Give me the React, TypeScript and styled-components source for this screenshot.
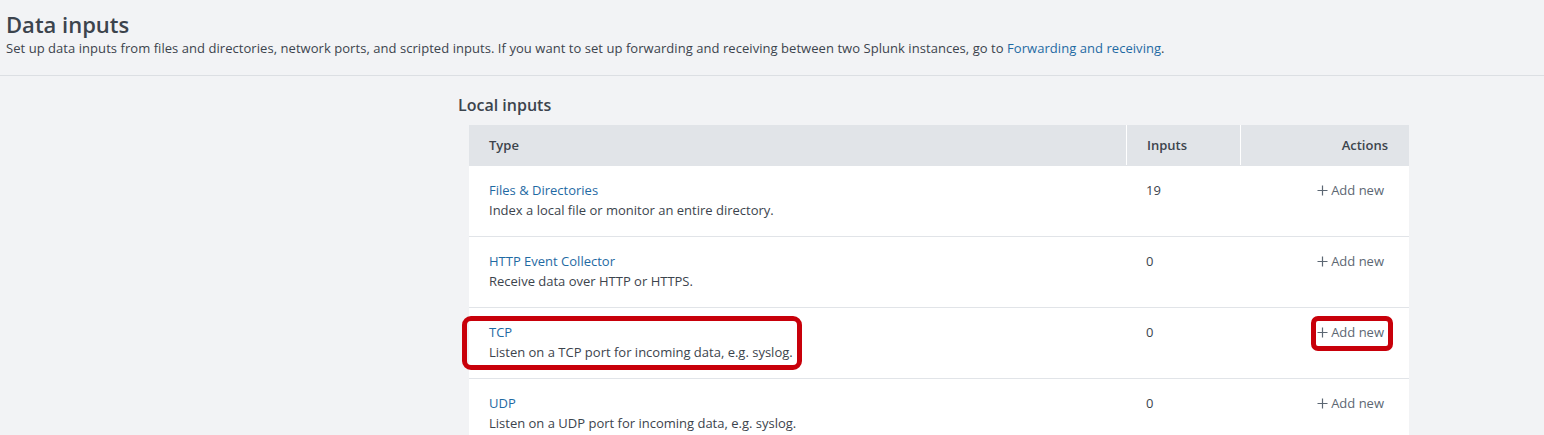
import React from "react";
import styled, { createGlobalStyle } from "styled-components";

const Global = createGlobalStyle`
  html, body { margin: 0; padding: 0; background: #f2f3f5; }
  body { font-family: "Open Sans", "Liberation Sans", sans-serif; color: #3c444d; }
`;

const Page = styled.div`
  width: 1544px;
  height: 435px;
  overflow: hidden;
  background: #f2f3f5;
`;

const Header = styled.header`
  padding: 10px 6px 17px;
  border-bottom: 1px solid #dcdfe3;
`;

const Title = styled.h1`
  margin: 0;
  font-size: 22px;
  font-weight: 600;
  line-height: 28px;
  color: #3c444d;
`;

const Desc = styled.p`
  margin: 0;
  font-size: 13px;
  line-height: 20px;
  letter-spacing: 0.05px;
  color: #3c444d;
`;

const Link = styled.a`
  color: #1f6aa3;
  text-decoration: none;
`;

const Section = styled.section`
  padding: 18px 0 0 458px;
`;

const SectionTitle = styled.h2`
  margin: 0 0 9px;
  font-size: 16px;
  font-weight: 600;
  line-height: 22px;
  color: #3c444d;
`;

const Table = styled.div`
  margin-left: 11px;
  width: 940px;
  display: grid;
  grid-template-columns: 657px 114px 169px;
`;

const HeadCell = styled.div<{ $right?: boolean; $sep?: boolean }>`
  height: 40px;
  background: #e1e4e8;
  display: flex;
  align-items: center;
  justify-content: ${(p) => (p.$right ? "flex-end" : "flex-start")};
  padding: ${(p) => (p.$right ? "0 21px 0 0" : "0 0 0 20px")};
  font-size: 13px;
  font-weight: 600;
  color: #3c444d;
  border-left: ${(p) => (p.$sep ? "1px solid #ffffff" : "none")};
  box-sizing: border-box;
`;

const Cell = styled.div<{ $right?: boolean }>`
  background: #ffffff;
  height: 71px;
  box-sizing: border-box;
  border-top: 1px solid #e1e4e8;
  padding: ${(p) => (p.$right ? "14px 25px 0 0" : "14px 0 0 20px")};
  display: flex;
  justify-content: ${(p) => (p.$right ? "flex-end" : "flex-start")};
  align-items: flex-start;
  font-size: 13px;
  line-height: 20px;
  color: #3c444d;
`;

const TypeBlock = styled.div<{ $mark?: boolean }>`
  position: relative;
  display: flex;
  flex-direction: column;
  ${(p) =>
    p.$mark
      ? `&::after {
    content: "";
    position: absolute;
    left: -27px;
    top: -6px;
    right: -9px;
    bottom: -8px;
    border: 5px solid #c8000a;
    border-radius: 9px;
    pointer-events: none;
  }`
      : ""}
`;

const TypeLink = styled.a`
  color: #1f6aa3;
  text-decoration: none;
`;

const AddNew = styled.a<{ $mark?: boolean }>`
  position: relative;
  color: #5c6773;
  text-decoration: none;
  display: inline-flex;
  align-items: center;
  gap: 3px;
  ${(p) =>
    p.$mark
      ? `&::after {
    content: "";
    position: absolute;
    left: -6px;
    top: -6px;
    right: -9px;
    bottom: -9px;
    border: 5px solid #c8000a;
    border-radius: 7px;
    pointer-events: none;
  }`
      : ""}
`;

const Plus = () => (
  <svg width="11" height="11" viewBox="0 0 11 11" aria-hidden="true">
    <path d="M5.5 0.5v10M0.5 5.5h10" stroke="#5c6773" strokeWidth="1.2" fill="none" />
  </svg>
);

const rows = [
  { name: "Files & Directories", desc: "Index a local file or monitor an entire directory.", count: "19" },
  { name: "HTTP Event Collector", desc: "Receive data over HTTP or HTTPS.", count: "0" },
  { name: "TCP", desc: "Listen on a TCP port for incoming data, e.g. syslog.", count: "0", mark: true },
  { name: "UDP", desc: "Listen on a UDP port for incoming data, e.g. syslog.", count: "0" },
];

export default function App() {
  return (
    <Page>
      <Global />
      <Header>
        <Title>Data inputs</Title>
        <Desc>
          Set up data inputs from files and directories, network ports, and scripted inputs. If you want to set up
          forwarding and receiving between two Splunk instances, go to <Link href="#">Forwarding and receiving</Link>.
        </Desc>
      </Header>
      <Section>
        <SectionTitle>Local inputs</SectionTitle>
        <Table>
          <HeadCell>Type</HeadCell>
          <HeadCell $sep>Inputs</HeadCell>
          <HeadCell $sep $right>Actions</HeadCell>
          {rows.map((r) => (
            <React.Fragment key={r.name}>
              <Cell>
                <TypeBlock $mark={r.mark}>
                  <TypeLink href="#">{r.name}</TypeLink>
                  <span>{r.desc}</span>
                </TypeBlock>
              </Cell>
              <Cell>{r.count}</Cell>
              <Cell $right>
                <AddNew href="#" $mark={r.mark}>
                  <Plus />
                  Add new
                </AddNew>
              </Cell>
            </React.Fragment>
          ))}
        </Table>
      </Section>
    </Page>
  );
}
